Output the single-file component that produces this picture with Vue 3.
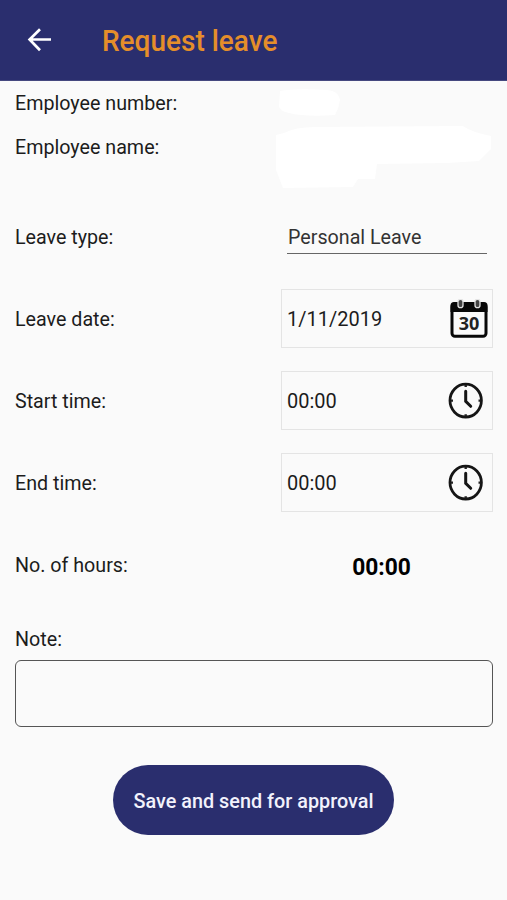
<script setup>
import { ref } from 'vue'

const times = ref([
  { label: 'Start time:', value: '00:00' },
  { label: 'End time:', value: '00:00' },
])
</script>

<template>
  <div class="screen">
    <header class="bar">
      <svg class="back" width="26" height="26" viewBox="0 0 26 26">
        <path d="M24 12.500H3M13 2.200L2.600 12.500l10.400 10.800" fill="none" stroke="#fff" stroke-width="2.700" />
      </svg>
      <h1 class="title">Request leave</h1>
    </header>

    <main class="form">
      <div class="row number">
        <span class="label">Employee number:</span>
        <svg class="masked" width="66" height="30" viewBox="0 0 66 30">
          <path d="M5 3Q20 0 52 2Q64 3 65 12Q64 20 60 27Q30 29 14 25Q4 23 4 18Z" fill="#fff" />
        </svg>
      </div>
      <div class="row name">
        <span class="label">Employee name:</span>
        <svg class="masked" width="218" height="64" viewBox="0 0 218 64">
          <path d="M1 10L9 8Q20 2 40 2L188 1Q196 7 216 11V24L204 36L172 38L102 39L100 54H83L78 62L8 63L1 45Z" fill="#fff" />
        </svg>
      </div>
      <div class="row">
        <span class="label">Leave type:</span>
        <div class="select"><span class="value">Personal Leave</span></div>
      </div>
      <div class="row">
        <span class="label">Leave date:</span>
        <div class="field date">
          <span class="value digits">1/11/2019</span>
          <svg width="38" height="40" viewBox="0 0 38 40">
            <rect x="2" y="5" width="34" height="32.300" rx="3" fill="#fafafa" stroke="#080808" stroke-width="3" />
            <path d="M.5 13V6.500Q.5 3 4 3H34Q37.500 3 37.500 6.500V13Z" fill="#080808" />
            <rect x="8" y=".3" width="5" height="8.400" rx="2.500" fill="#444" stroke="#e4e4e4" stroke-width="1.300" />
            <rect x="25" y=".3" width="5" height="8.400" rx="2.500" fill="#444" stroke="#e4e4e4" stroke-width="1.300" />
            <text class="day" x="19" y="31" text-anchor="middle">30</text>
          </svg>
        </div>
      </div>
      <div v-for="time in times" :key="time.label" class="row">
        <span class="label">{{ time.label }}</span>
        <div class="field">
          <span class="value digits">{{ time.value }}</span>
          <svg width="36" height="38" viewBox="0 0 36 38">
            <ellipse cx="17.700" cy="18.600" rx="15.700" ry="16.400" fill="none" stroke="#151515" stroke-width="2.800" />
            <path d="M17.700 3V5M17.700 32.300V34.300M3 18.600H5M30.500 18.600H32.500" stroke="#222" stroke-width="2.400" />
            <path d="M17.700 9.300V19.300L22.700 24.300" fill="none" stroke="#151515" stroke-width="3" stroke-linecap="round" />
          </svg>
        </div>
      </div>
      <div class="row">
        <span class="label">No. of hours:</span>
        <strong class="total">00:00</strong>
      </div>
      <label class="label note-label" for="note">Note:</label>
      <textarea id="note" class="note"></textarea>
      <button class="save" type="button"><span class="caption">Save and send for approval</span></button>
    </main>
  </div>
</template>

<style>
body {
  background: #fafafa;
}
</style>

<style scoped>
.screen {
  min-height: 900px;
  box-sizing: border-box;
  background: #fafafa;
  color: #1c1c1c;
  font-family: Roboto, sans-serif;
  font-size: 20.5px;
  line-height: 44px;
}
.bar {
  height: 81px;
  box-sizing: border-box;
  padding: 0 27px;
  display: flex;
  align-items: center;
  background: #2a2e6e;
  border-bottom: 1px solid #45487f;
}
.title {
  margin: 2px 0 0 49px;
  font-size: 29px;
  font-weight: 500;
  color: #e58e2a;
}
/* Slightly condensed lettering */
.title,
.label,
.value {
  transform: scaleX(0.96);
  transform-origin: left center;
}
.title {
  transform: scaleX(0.965);
}
.value {
  display: block;
}
.value.digits {
  transform: scaleX(0.975);
}
.form {
  display: flex;
  flex-direction: column;
  padding: 0 14px 0 15px;
}
.row {
  display: grid;
  grid-template-columns: 266px 212px;
  align-items: center;
  height: 82px;
}
.number {
  height: 44px;
}
.name {
  height: 71px;
  align-items: start;
}
.masked {
  display: block;
  margin-left: -6px;
}
.select {
  width: 200px;
  height: 34px;
  box-sizing: border-box;
  margin-left: 6px;
  padding-left: 1px;
  border-bottom: 1.5px solid #666;
  line-height: 34px;
  color: #333;
}
.field {
  height: 59px;
  box-sizing: border-box;
  margin-bottom: 2px;
  border: 1px solid #e4e4e4;
  padding: 1px 8px 0 5px;
  display: flex;
  align-items: center;
  justify-content: space-between;
}
.field.date {
  padding-right: 4px;
}
.day {
  font: 700 18px "Open Sans", sans-serif;
  fill: #222;
}
.total {
  padding-top: 3px;
  text-align: center;
  font-size: 23.5px;
  color: #000;
  margin-right: 11px;
  transform: scaleX(0.97);
}
.note-label {
  margin-top: 11px;
  height: 43px;
}
.note {
  height: 67px;
  box-sizing: border-box;
  border: 1.5px solid #555;
  border-radius: 6px;
  background: transparent;
  resize: none;
  font: inherit;
  outline: none;
}
.save {
  align-self: center;
  width: 281px;
  height: 70px;
  margin: 38px 1px 0 0;
  padding: 2px 0 0;
  border: 0;
  border-radius: 35px;
  background: #2a2e6e;
  color: #f2f2fc;
  font: 500 20.5px Roboto, sans-serif;
}
.caption {
  display: block;
  transform: scaleX(0.967);
}
</style>
